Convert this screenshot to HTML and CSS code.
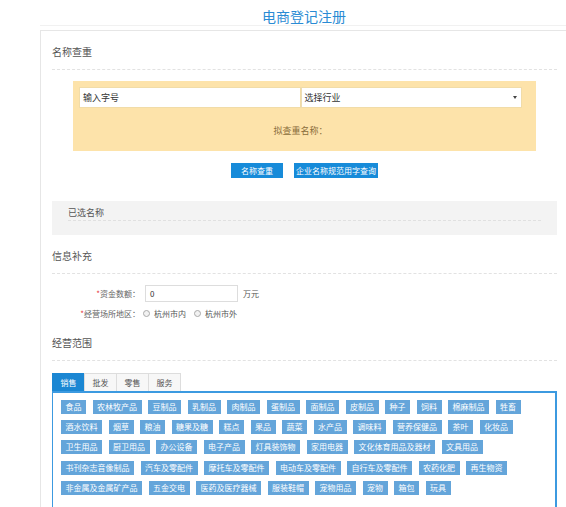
FILE: index.html
```html
<!DOCTYPE html>
<html lang="zh-CN">
<head>
<meta charset="utf-8">
<title>电商登记注册</title>
<link rel="stylesheet" href="styles.css">
</head>
<body>
<div class="page">
  <header class="title-bar"><h1 class="title">电商登记注册</h1></header>
  <div class="card">
    <section class="section">
      <h2 class="sec-title">名称查重</h2>
      <div class="query-box">
        <div class="query-row">
          <div class="field">输入字号</div>
          <div class="field select">选择行业<span class="caret"></span></div>
        </div>
        <div class="query-hint">拟查重名称：</div>
      </div>
      <div class="btn-row">
        <button class="btn btn-fixed">名称查重</button>
        <button class="btn">企业名称规范用字查询</button>
      </div>
      <div class="picked">
        <div class="picked-title">已选名称</div>
      </div>
    </section>

    <section class="section">
      <h2 class="sec-title">信息补充</h2>
      <div class="form">
        <div class="form-row row-input">
          <div class="form-label"><span class="star">*</span>资金数额：</div>
          <div class="num-input">0</div>
          <div class="unit">万元</div>
        </div>
        <div class="form-row row-radio">
          <div class="form-label"><span class="star">*</span>经营场所地区：</div>
          <div class="radios">
            <span class="radio"><span class="radio-dot"></span>杭州市内</span>
            <span class="radio"><span class="radio-dot"></span>杭州市外</span>
          </div>
        </div>
      </div>
    </section>

    <section class="section">
      <h2 class="sec-title">经营范围</h2>
      <div class="tabs">
        <div class="tab active">销售</div>
        <div class="tab">批发</div>
        <div class="tab">零售</div>
        <div class="tab">服务</div>
      </div>
      <div class="panel">
        <div class="tags">
          <span class="tag">食品</span>
          <span class="tag">农林牧产品</span>
          <span class="tag">豆制品</span>
          <span class="tag">乳制品</span>
          <span class="tag">肉制品</span>
          <span class="tag">蛋制品</span>
          <span class="tag">面制品</span>
          <span class="tag">皮制品</span>
          <span class="tag">种子</span>
          <span class="tag">饲料</span>
          <span class="tag">棉麻制品</span>
          <span class="tag">牲畜</span>
          <span class="tag">酒水饮料</span>
          <span class="tag">烟草</span>
          <span class="tag">粮油</span>
          <span class="tag">糖果及糖</span>
          <span class="tag">糕点</span>
          <span class="tag">果品</span>
          <span class="tag">蔬菜</span>
          <span class="tag">水产品</span>
          <span class="tag">调味料</span>
          <span class="tag">营养保健品</span>
          <span class="tag">茶叶</span>
          <span class="tag">化妆品</span>
          <span class="tag">卫生用品</span>
          <span class="tag">厨卫用品</span>
          <span class="tag">办公设备</span>
          <span class="tag">电子产品</span>
          <span class="tag">灯具装饰物</span>
          <span class="tag">家用电器</span>
          <span class="tag">文化体育用品及器材</span>
          <span class="tag">文具用品</span>
          <span class="tag">书刊杂志音像制品</span>
          <span class="tag">汽车及零配件</span>
          <span class="tag">摩托车及零配件</span>
          <span class="tag">电动车及零配件</span>
          <span class="tag">自行车及零配件</span>
          <span class="tag">农药化肥</span>
          <span class="tag">再生物资</span>
          <span class="tag">非金属及金属矿产品</span>
          <span class="tag">五金交电</span>
          <span class="tag">医药及医疗器械</span>
          <span class="tag">服装鞋帽</span>
          <span class="tag">宠物用品</span>
          <span class="tag">宠物</span>
          <span class="tag">箱包</span>
          <span class="tag">玩具</span>
        </div>
      </div>
    </section>
  </div>
</div>
</body>
</html>
```

FILE: styles.css
```css
html, body {
  margin: 0;
  padding: 0;
  overflow: hidden;
  background: #ffffff;
}

body {
  font-family: "Noto Sans CJK SC", "Noto Sans", sans-serif;
  color: #555555;
}

.page {
  margin-left: 40px;
  width: 528px;
}

.title-bar {
  height: 26px;
  box-sizing: border-box;
  border-bottom: 1px solid #f1f1f1;
  text-align: center;
}

.title {
  margin: 0;
  padding-top: 8px;
  font-size: 14px;
  line-height: 17px;
  font-weight: normal;
  color: #2a8bd4;
}

.card {
  margin-top: 4px;
  border: 1px solid #e6e6e6;
  padding: 0 10px 40px 11px;
}

.sec-title {
  margin: 0;
  padding: 14px 0 10px;
  font-size: 10px;
  line-height: 14px;
  font-weight: normal;
  color: #555555;
  border-bottom: 1px dashed #e2e2e2;
}

/* name query */
.query-box {
  margin: 11px 21px 0;
  background: #fde3aa;
  padding: 6px 14px 13px 6px;
}

.query-row {
  display: grid;
  grid-template-columns: 1fr 1fr;
  height: 21px;
}

.field {
  position: relative;
  background: #ffffff;
  border: 1px solid #f1dca8;
  font-size: 9px;
  line-height: 19px;
  padding-left: 3px;
  color: #333333;
}

.select {
  border-left-color: #ecdcb4;
}

.caret {
  position: absolute;
  right: 4px;
  top: 8px;
  width: 0;
  height: 0;
  border-left: 2.5px solid transparent;
  border-right: 2.5px solid transparent;
  border-top: 3px solid #444444;
}

.query-hint {
  margin-top: 16px;
  text-align: center;
  font-size: 9px;
  line-height: 14px;
  color: #8a6d3b;
}

.btn-row {
  display: flex;
  justify-content: center;
  gap: 11px;
  margin-top: 12px;
}

.btn {
  border: 0;
  margin: 0;
  background: #178bd9;
  color: #ffffff;
  font-family: inherit;
  font-size: 8px;
  line-height: 15px;
  height: 15px;
  padding: 0 2px;
}

.btn-fixed {
  width: 52px;
}

.picked {
  margin-top: 23px;
  background: #f3f3f3;
  padding: 5px 16px 14px;
}

.picked-title {
  font-size: 9px;
  line-height: 13px;
  padding-bottom: 1px;
  border-bottom: 1px dashed #e0e0e0;
  color: #555555;
}

/* info */
.form {
  padding-bottom: 2px;
}

.form-row {
  display: flex;
  align-items: center;
  gap: 5px;
  font-size: 8px;
}

.row-input {
  margin-top: 11px;
  height: 17px;
}

.row-radio {
  margin-top: 4px;
  height: 14px;
}

.form-label {
  width: 88px;
  text-align: right;
  color: #666666;
}

.star {
  color: #e5383b;
}

.num-input {
  width: 93px;
  height: 17px;
  box-sizing: border-box;
  border: 1px solid #dddddd;
  padding-left: 4px;
  line-height: 15px;
  color: #333333;
}

.unit {
  color: #555555;
}

.radios {
  display: flex;
  gap: 8px;
  margin-left: -2px;
}

.radio {
  display: inline-flex;
  align-items: center;
  gap: 4px;
  color: #555555;
}

.radio-dot {
  width: 7px;
  height: 7px;
  box-sizing: border-box;
  border: 1px solid #aaaaaa;
  border-radius: 50%;
  background: #f2f2f2;
}

/* scope */
.tabs {
  display: flex;
  margin-top: 12px;
}

.tab {
  width: 33px;
  height: 18px;
  box-sizing: border-box;
  border: 1px solid #dddddd;
  border-bottom: 0;
  margin-right: -1px;
  background: #f7f7f7;
  font-size: 8px;
  line-height: 17px;
  text-align: center;
  color: #555555;
}

.tab.active {
  background: #1b87d3;
  border-color: #1b87d3;
  color: #ffffff;
}

.panel {
  border: solid #3c9ae0;
  border-width: 2px 2px 1px 1px;
  padding: 7px 8px 30px;
}

.tags {
  display: flex;
  flex-wrap: wrap;
  gap: 6.2px 6.5px;
}

.tag {
  background: #64a5da;
  color: #ffffff;
  font-size: 8px;
  line-height: 14px;
  padding: 0 4.5px;
}
```
